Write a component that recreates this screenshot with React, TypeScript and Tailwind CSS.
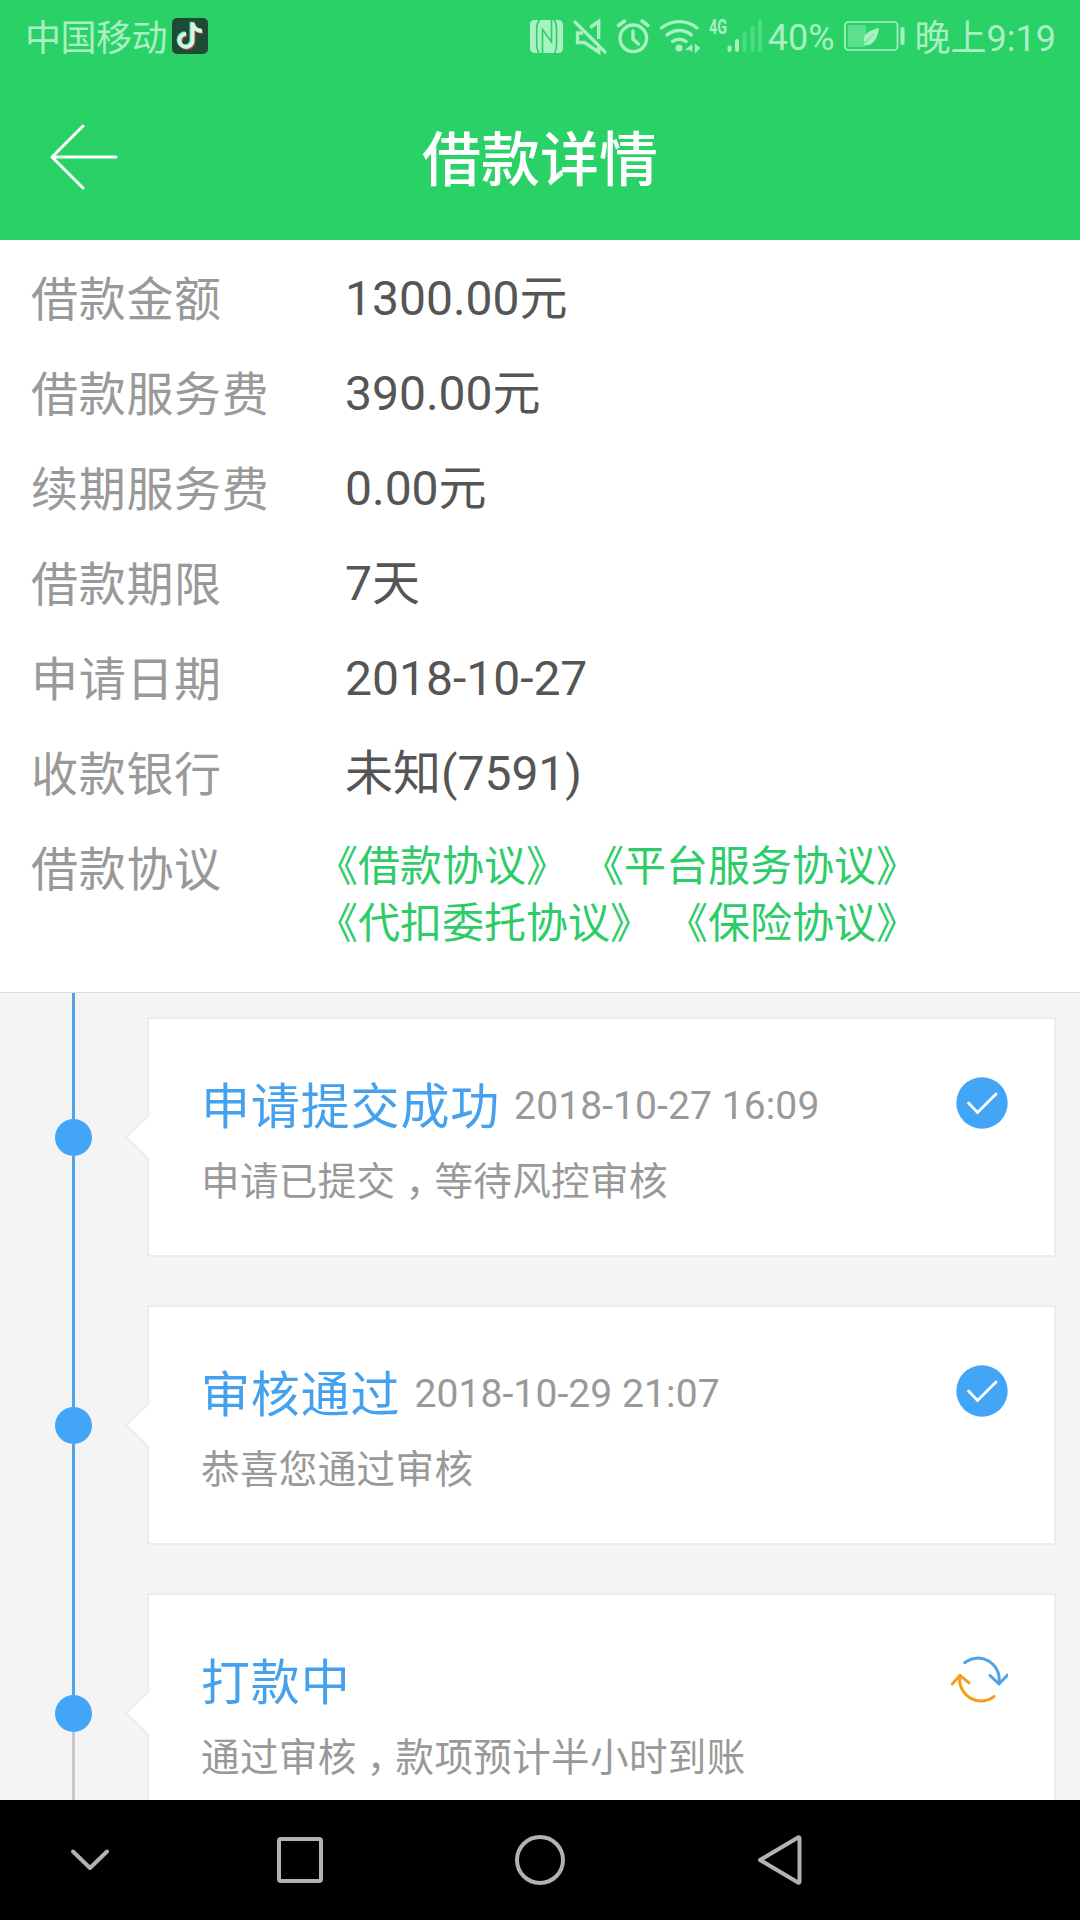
import type { ReactNode } from "react"

type Step = {
    title: string
    date?: string
    desc: ReactNode
    status: "done" | "pending"
}

const rows = [
    { label: "借款金额", value: "1300.00元" },
    { label: "借款服务费", value: "390.00元" },
    { label: "续期服务费", value: "0.00元" },
    { label: "借款期限", value: "7天" },
    { label: "申请日期", value: "2018-10-27" },
    { label: "收款银行", value: "未知(7591)" },
]

// centred full-width comma, dropped to the baseline
const Comma = () => <span lang="zh-TW" className="relative top-[0.32em] font-['Noto_Sans_CJK_TC',sans-serif] leading-none">，</span>

const steps: Step[] = [
    {
        title: "申请提交成功",
        date: "2018-10-27 16:09",
        desc: <>申请已提交<Comma />等待风控审核</>,
        status: "done",
    },
    {
        title: "审核通过",
        date: "2018-10-29 21:07",
        desc: <>恭喜您通过审核</>,
        status: "done",
    },
    {
        title: "打款中",
        desc: <>通过审核<Comma />款项预计半小时到账</>,
        status: "pending",
    },
]

function TiktokIcon() {
    return (
        <svg width="36" height="36" viewBox="0 0 36 36" className="ml-[5px]">
            <rect width="36" height="36" rx="5" fill="#1f4a33" />
            <g fill="none" strokeWidth="4">
                <path d="M20.500 4.500v18a6.500 6.500 0 1 1-6.500-6.500M20.500 5c1 5 5 8 9.500 8" stroke="#3fe0d0" transform="translate(-1 -.7)" />
                <path d="M20.500 4.500v18a6.500 6.500 0 1 1-6.500-6.500M20.500 5c1 5 5 8 9.500 8" stroke="#b0503f" transform="translate(1 1)" />
                <path d="M20.500 4.500v18a6.500 6.500 0 1 1-6.500-6.500M20.500 5c1 5 5 8 9.500 8" stroke="#d4f5e0" />
            </g>
        </svg>
    )
}

function StatusIcons() {
    return (
        <svg width="236" height="44" viewBox="528 14 236 44" fill="none" stroke="#a9f0c3">
            {/* nfc */}
            <rect x="530" y="20" width="33" height="33" rx="4.5" fill="#a9f0c3" stroke="none" />
            <path d="M539.500 20c-2 2.500-2.800 5-2.800 8.500V45c0 3 .8 5.500 2.300 8M542.500 53V29.500L551.500 42V20M554 20c2 2.500 2.500 5 2.500 8.500V45c0 3-.8 5.500-2 8" stroke="#29d167" strokeWidth="1.600" />
            {/* muted speaker */}
            <path d="M575 22l30 30" strokeWidth="3.200" strokeLinecap="round" />
            <path d="M590 27.500l8.700-6V39M583 33h-5.500v9.500h7l14.200 9.500v-5" strokeWidth="3.400" />
            {/* alarm */}
            <circle cx="633.300" cy="38.300" r="13.300" strokeWidth="3.400" />
            <path d="M633 31v8l5.500 5" strokeWidth="3.400" strokeLinecap="round" />
            <path d="M618.500 25.500l6-4.500M648 25.500l-6-4.500" strokeWidth="3.500" strokeLinecap="round" />
            {/* wifi */}
            <path d="M661.500 28a28 28 0 0 1 35.500 0M667 35a19 19 0 0 1 24.500 0M672.500 41.500a11 11 0 0 1 13.500 0" strokeWidth="3.400" strokeLinecap="round" />
            <circle cx="679" cy="48" r="3.500" fill="#a9f0c3" stroke="none" />
            <path d="M691.500 44.500v7.500M692 45l-5.500 4.500h6M695.500 45v7l4-4z" fill="#a9f0c3" strokeWidth="1.200" />
            <text x="709" y="34" fill="#a9f0c3" stroke="none" fontSize="20.5" fontWeight="700" textLength="18" lengthAdjust="spacingAndGlyphs">4G</text>
            {/* signal */}
            <g strokeWidth="4" strokeLinecap="round">
                <path d="M729.500 47.500v2.500M737 41v9" />
                <path d="M744.500 34v16M752.500 27.500V50M760 21.500V50" stroke="#4cdc82" />
            </g>
        </svg>
    )
}

function Battery() {
    return (
        <svg width="61" height="30" viewBox="0 0 61 30" fill="none" className="ml-[9px]">
            <rect x="1" y="1" width="52.500" height="28" rx="3.500" stroke="#a9f0c3" strokeWidth="1.700" />
            <rect x="4" y="4" width="18" height="22" rx="1.500" fill="#5de08e" />
            <path d="M35 7c-8 2-15 5-15 11 0 2 .5 3 1 4-1 1-1 2 0 2 6 1 12-3 14-17z" fill="#a9f0c3" />
            <path d="M21 22c3-3 5-6 9-9" stroke="#5de08e" strokeWidth="1" />
            <rect x="56.500" y="6" width="4" height="18" rx="2" fill="#a9f0c3" />
        </svg>
    )
}

function StepIcon({ status }: { status: Step["status"] }) {
    if (status === "done") {
        return (
            <svg width="52" height="52" viewBox="0 0 52 52" fill="none" className="mr-[46px]">
                <circle cx="26" cy="26" r="25.700" fill="#42a5f5" />
                <path d="M12.500 26l9 9.500L40 17" stroke="#fff" strokeWidth="2.800" strokeLinecap="round" />
            </svg>
        )
    }
    return (
        <svg width="58" height="52" viewBox="0 0 58 52" fill="none" strokeWidth="3" strokeLinecap="round" strokeLinejoin="round" className="mr-[46px]">
            <g stroke="#4fa3e6">
                <path d="M14.700 9.700A21.300 21.300 0 0 1 49 29.500" />
                <path d="M40 22.500l9 8.500 8.500-9" />
            </g>
            <g stroke="#efa01f">
                <path d="M44 43.500A21.300 21.300 0 0 1 10 23" />
                <path d="M2.300 31l7.700-8.700 9 7.500" />
            </g>
        </svg>
    )
}

function StepItem({ step, last }: { step: Step; last: boolean }) {
    return (
        <div className="flex h-72 shrink-0">
            <div className="flex w-[147px] shrink-0 flex-col items-center">
                <div className="h-[126px] w-[3px] bg-[#50a3e6]"></div>
                <div className="h-[37px] w-[37px] rounded-full bg-[#42a5f5]"></div>
                <div className={last ? "w-[3px] grow bg-[#c8c8c8]" : "w-[3px] grow bg-[#50a3e6]"}></div>
            </div>
            <div className="relative mt-6 h-60 w-[909px] border-2 border-[#ececec] bg-white pl-[52px] pt-[54px]">
                <svg width="26" height="46" viewBox="0 0 26 46" className="absolute -left-[25px] top-[95px]">
                    <path d="M25 1L2 23l23 22" fill="#fff" stroke="#ececec" strokeWidth="2" />
                    <path d="M25 2v42" stroke="#fff" strokeWidth="2" />
                </svg>
                <div className="flex h-[60px] items-center justify-between">
                    <div className="flex items-center gap-[14px]">
                        <p className="pt-2.5 text-[49px] leading-[60px] tracking-[0.85px] text-[#45a1ee]">{step.title}</p>
                        {step.date && <p className="pt-1.5 text-[39px] leading-[60px] tracking-[0.1px] text-[#999]">{step.date}</p>}
                    </div>
                    <StepIcon status={step.status} />
                </div>
                <p className="mt-[19px] text-[38.5px] leading-[60px] tracking-[0.4px] text-[#999]">{step.desc}</p>
            </div>
        </div>
    )
}

export default function App() {
    return (
        <div lang="zh-CN" className="flex h-[1920px] w-[1080px] flex-col overflow-hidden bg-white font-['Roboto','Noto_Sans_CJK_SC',sans-serif]">
            <header className="h-60 shrink-0 bg-[#29d167]">
                <div className="flex h-[72px] items-center justify-between pl-[25px] pr-6 text-[36px] leading-[40px] text-[#a9f0c3]">
                    <div className="flex items-center">
                        <span className="pt-[5px] tracking-[-0.5px]">中国移动</span>
                        <TiktokIcon />
                    </div>
                    <div className="flex items-center">
                        <StatusIcons />
                        <span className="ml-1 pt-1">40%</span>
                        <Battery />
                        <span className="ml-2.5 pt-[5px]">晚上9:19</span>
                    </div>
                </div>
                <div className="grid h-[168px] grid-cols-[420px_240px_420px] items-center">
                    <svg width="68" height="67" viewBox="0 -1 68 67" fill="none" stroke="#fff" strokeWidth="3" strokeLinecap="round" strokeLinejoin="round" className="ml-[50px]">
                        <path d="M33 2L2 33l31 31M2 33h64" />
                    </svg>
                    <h1 className="pt-2.5 text-center text-[59px] font-medium leading-[80px] text-white">借款详情</h1>
                </div>
            </header>

            <section className="h-[752px] shrink-0 pl-[31px] pt-3">
                {rows.map((row) => (
                    <div key={row.label} className="grid h-[95px] grid-cols-[314px_1fr] text-[48px]">
                        <p className="text-[47px] leading-[95px] tracking-[0.7px] text-[#999]">{row.label}</p>
                        <p className="leading-[93px] text-[#555]">{row.value}</p>
                    </div>
                ))}
                <div className="grid grid-cols-[285px_1fr]">
                    <p className="text-[47px] leading-[95px] tracking-[0.7px] text-[#999]">借款协议</p>
                    <div className="pt-4 text-[42px] leading-[57px] text-[#2ecc68]">
                        <div className="flex gap-[14px]">
                            <a>《借款协议》</a>
                            <a>《平台服务协议》</a>
                        </div>
                        <div className="flex gap-[14px]">
                            <a>《代扣委托协议》</a>
                            <a>《保险协议》</a>
                        </div>
                    </div>
                </div>
            </section>

            <main className="flex h-[808px] shrink-0 flex-col overflow-hidden border-t border-[#ddd] bg-[#f4f4f4]">
                {steps.map((step, i) => (
                    <StepItem key={step.title} step={step} last={i === steps.length - 1} />
                ))}
            </main>

            <nav className="h-[120px] shrink-0 bg-black">
                <svg width="1080" height="120" viewBox="0 0 1080 120" fill="none" stroke="#b2b2b2" strokeWidth="4" strokeLinejoin="round">
                    <path d="M73 51.500L90 68l17-16.500" strokeLinecap="round" />
                    <rect x="279" y="39" width="42" height="42" rx="2" />
                    <circle cx="540" cy="60" r="23" />
                    <path d="M760 60l38-22.500q1.500-.5 1.500 1v43q0 1.500-1.500 1z" />
                </svg>
            </nav>
        </div>
    )
}
